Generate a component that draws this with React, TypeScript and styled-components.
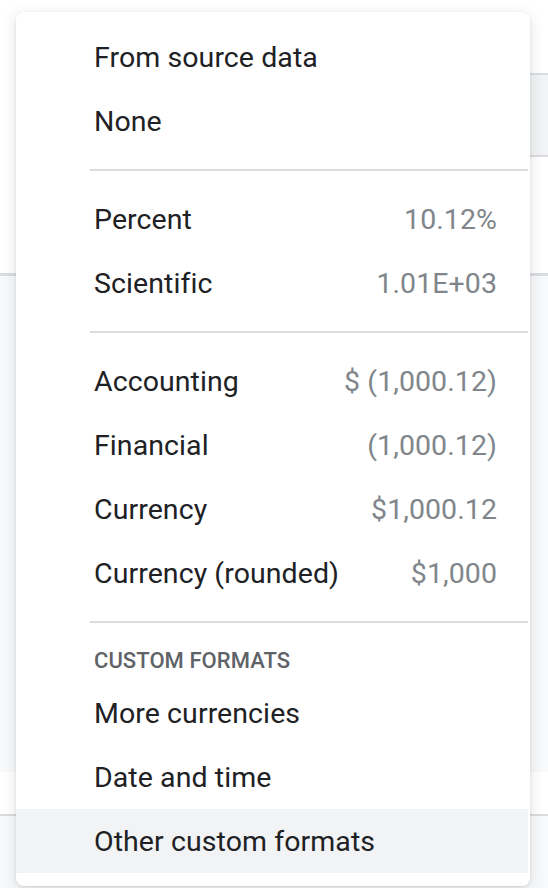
import React, { ReactElement } from 'react';
import styled, { createGlobalStyle } from 'styled-components';

const GlobalStyle = createGlobalStyle`
  html, body {
    margin: 0;
    padding: 0;
    background: #ffffff;
  }
  body {
    font-family: Roboto, "Liberation Sans", Arial, sans-serif;
    -webkit-font-smoothing: antialiased;
  }
`;

const Page = styled.div`
  position: relative;
  width: 548px;
  height: 888px;
  overflow: hidden;
  display: flex;
  flex-direction: column;
  background: #ffffff;
`;

const TopBand = styled.div`
  height: 276px;
  display: flex;
  justify-content: flex-end;
  padding-top: 73px;
  box-sizing: border-box;
  border-bottom: 3px solid #dadce0;
`;

const FieldStub = styled.div`
  width: 18px;
  height: 84px;
  background: #f1f3f4;
  border-top: 2px solid #dadce0;
  border-bottom: 2px solid #dadce0;
  box-sizing: border-box;
`;

const Band = styled.div<{ $tone: 'grey' | 'white'; $height?: number; $line?: boolean }>`
  background: ${(p) => (p.$tone === 'grey' ? '#f8f9fa' : '#ffffff')};
  ${(p) => (p.$height ? `height: ${p.$height}px;` : 'flex: 1;')}
  ${(p) => (p.$line ? 'border-bottom: 2px solid #dadce0;' : '')}
  box-sizing: border-box;
  flex-shrink: 0;
`;

const Menu = styled.div`
  position: absolute;
  top: 12px;
  left: 16px;
  width: 514px;
  height: 874px;
  box-sizing: border-box;
  padding: 13px 2px 13px 0;
  background: #ffffff;
  border-radius: 8px;
  box-shadow: 0 4px 16px rgba(60, 64, 67, 0.14), 0 1px 3px rgba(60, 64, 67, 0.12);
  display: flex;
  flex-direction: column;
`;

const Item = styled.div<{ $active?: boolean }>`
  height: 64px;
  flex-shrink: 0;
  display: flex;
  align-items: center;
  justify-content: space-between;
  padding: 0 31px 0 78px;
  font-size: 28.5px;
  color: #202124;
  background: ${(p) => (p.$active ? '#f1f3f4' : 'transparent')};
  letter-spacing: 0.08px;
`;

const Hint = styled.span`
  color: #80868b;
`;

const Divider = styled.div`
  height: 2px;
  flex-shrink: 0;
  margin: 16px 0 16px 74px;
  background: #dadce0;
`;

const SectionTitle = styled.div`
  height: 42px;
  flex-shrink: 0;
  display: flex;
  align-items: center;
  padding-left: 78px;
  font-size: 22px;
  font-weight: 500;
  color: #5f6368;
  letter-spacing: 0.05px;
`;

type Option = { label: string; hint?: string; active?: boolean };

const groups: Option[][] = [
  [{ label: 'From source data' }, { label: 'None' }],
  [
    { label: 'Percent', hint: '10.12%' },
    { label: 'Scientific', hint: '1.01E+03' },
  ],
  [
    { label: 'Accounting', hint: '$ (1,000.12)' },
    { label: 'Financial', hint: '(1,000.12)' },
    { label: 'Currency', hint: '$1,000.12' },
    { label: 'Currency (rounded)', hint: '$1,000' },
  ],
];

const custom: Option[] = [
  { label: 'More currencies' },
  { label: 'Date and time' },
  { label: 'Other custom formats', active: true },
];

const renderItem = (o: Option): ReactElement => (
  <Item key={o.label} $active={o.active}>
    <span>{o.label}</span>
    {o.hint && <Hint>{o.hint}</Hint>}
  </Item>
);

const App = (): ReactElement => (
  <>
    <GlobalStyle />
    <Page>
      <TopBand>
        <FieldStub />
      </TopBand>
      <Band $tone="grey" $height={496} />
      <Band $tone="white" $height={44} $line />
      <Band $tone="grey" />
      <Menu>
        {groups.map((g, i) => (
          <React.Fragment key={i}>
            {i > 0 && <Divider />}
            {g.map(renderItem)}
          </React.Fragment>
        ))}
        <Divider />
        <SectionTitle>CUSTOM FORMATS</SectionTitle>
        {custom.map(renderItem)}
      </Menu>
    </Page>
  </>
);

export default App;
